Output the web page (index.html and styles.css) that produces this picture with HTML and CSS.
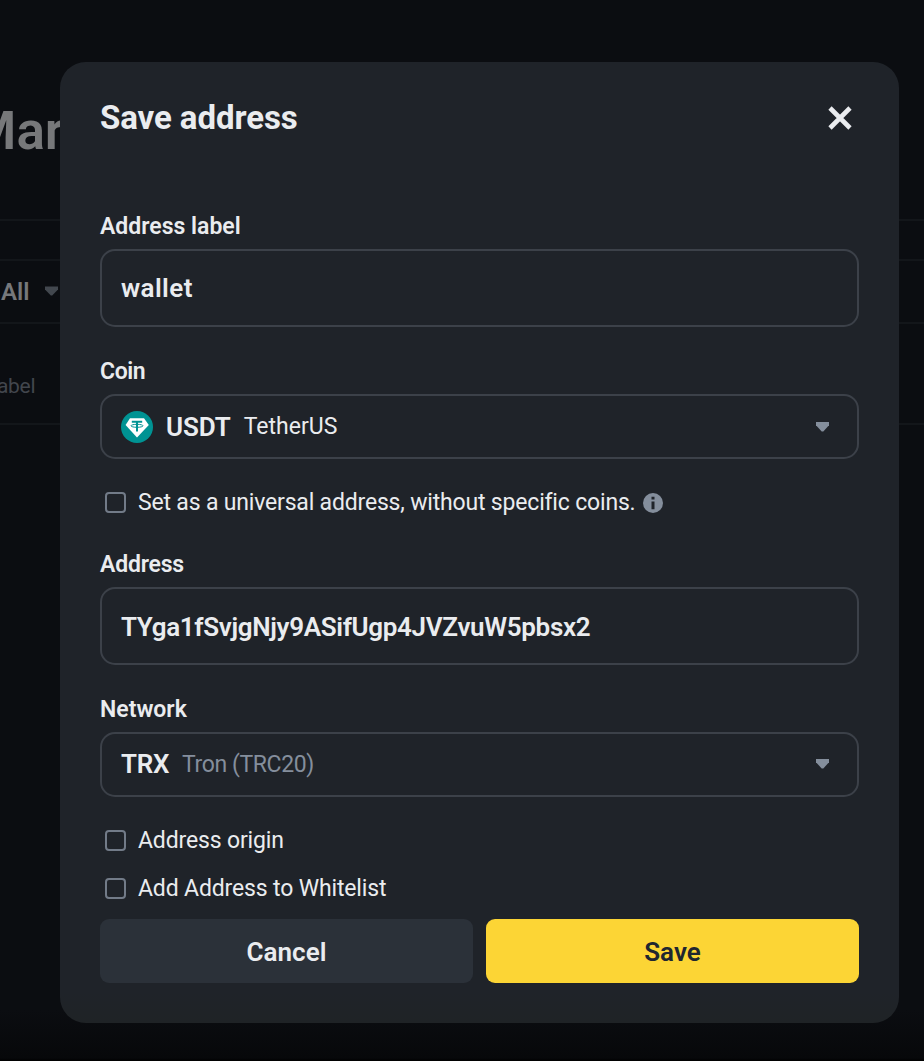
FILE: index.html
```html
<!DOCTYPE html>
<html lang="en">
<head>
<meta charset="utf-8">
<title>Save address</title>
<link rel="stylesheet" href="styles.css">
</head>
<body>
<div class="page">
  <h1 class="page-title"><span class="page-title-text">Mar</span></h1>
  <div class="band"></div>
  <div class="filters"><span class="filter-text">All</span>
    <svg class="filter-caret" viewBox="0 0 13 10"><path d="M0 0.5h13v3L7.2 9.5H5.8L0 3.5z"/></svg>
  </div>
  <div class="table-head"><span class="column-text">abel</span></div>
</div>
<main class="modal">
  <header class="modal-head">
    <h2 class="title">Save address</h2>
    <svg class="close" viewBox="0 0 24 24"><path d="M2 2l20 20M22 2L2 22"/></svg>
  </header>

  <div class="label">Address label</div>
  <div class="box input"><span class="t-wallet">wallet</span></div>

  <div class="label"><span class="t-coin">Coin</span></div>
  <div class="box select">
    <svg class="coin" viewBox="0 0 32 32">
      <circle class="coin-disc" cx="16" cy="16" r="16"/>
      <path class="coin-gem" d="M9 7.2h14l4.8 6.8L16 26.4 4.6 14z"/>
      <path class="coin-mark" d="M10.8 10.8h10.4M16 10.8v9.6"/>
      <ellipse class="coin-ring" cx="16" cy="14.8" rx="6" ry="1.5"/>
    </svg>
    <span class="code t-usdt">USDT</span><span class="name t-tether">TetherUS</span>
    <svg class="caret" viewBox="0 0 13 10"><path d="M0 0h13v3.3L7.3 9.6H5.7L0 3.3z"/></svg>
  </div>

  <div class="check universal"><i class="tick"></i><span class="t-universal">Set as a universal address, without specific coins.</span>
    <svg class="info" viewBox="0 0 20 20"><circle cx="10" cy="10" r="10"/><path d="M8.5 3.8h3v2.7h-3zM8.5 8.4h3v7.8h-3z"/></svg>
  </div>

  <div class="label"><span class="t-address">Address</span></div>
  <div class="box input"><span class="t-hash">TYga1fSvjgNjy9ASifUgp4JVZvuW5pbsx2</span></div>

  <div class="label">Network</div>
  <div class="box select">
    <span class="code t-trx">TRX</span><span class="name muted t-tron">Tron (TRC20)</span>
    <svg class="caret" viewBox="0 0 13 10"><path d="M0 0h13v3.3L7.3 9.6H5.7L0 3.3z"/></svg>
  </div>

  <div class="check origin"><i class="tick"></i><span>Address origin</span></div>
  <div class="check whitelist"><i class="tick"></i><span class="t-white">Add Address to Whitelist</span></div>

  <footer class="actions">
    <button class="btn cancel">Cancel</button>
    <button class="btn save">Save</button>
  </footer>
</main>
</body>
</html>
```
FILE: styles.css
```css
* { box-sizing: border-box; }
body {
  margin: 0;
  width: 924px;
  height: 1061px;
  overflow: hidden;
  position: relative;
  background: linear-gradient(#0b0d11 0, #0b0d11 1010px, #07080a 1058px, #000 1061px);
  color: #eaecef;
  font-family: Roboto, "Liberation Sans", sans-serif;
  white-space: nowrap;
}
h1, h2 { margin: 0; }
svg { display: block; flex: none; }

.page { height: 425px; display: flex; flex-direction: column; }
.page-title { height: 219px; padding-top: 98px; margin-left: -30px; font-size: 53px; line-height: 66px; font-weight: 600; color: #77787a; }
.band { height: 42px; border-top: 2px solid #13161a; border-bottom: 2px solid #13161a; }
.filters { height: 63px; border-bottom: 2px solid #13161a; display: flex; align-items: center; padding-left: 1px; font-size: 24px; font-weight: 600; color: #76787b; }
.filter-caret { width: 13px; height: 10px; margin: -2px 0 0 15px; fill: #42474e; }
.table-head { height: 101px; border-bottom: 2px solid #13161a; padding-top: 49px; font-size: 21px; line-height: 26px; color: #42464d; }
.column-text { margin-left: -3px; letter-spacing: -0.3px; }

.modal {
  position: absolute;
  left: 60px;
  top: 62px;
  width: 839px;
  height: 961px;
  padding: 32px 40px 40px;
  border-radius: 26px;
  background: linear-gradient(#1f2329 0, #1f2329 930px, #1f2326 961px);
  display: flex;
  flex-direction: column;
}
.modal-head { height: 48px; margin-bottom: 67px; display: flex; justify-content: space-between; align-items: center; }
.title { font-size: 33px; font-weight: 700; line-height: 48px; letter-spacing: -0.08px; }
.close { width: 24px; height: 24px; margin-right: 7px; stroke: #eaecef; stroke-width: 4.6; fill: none; }
.label { height: 33px; margin-bottom: 7px; padding-top: 1px; font-size: 23px; line-height: 33px; font-weight: 600; }
.box { flex: none; border: 2px solid #3c4149; border-radius: 15px; display: flex; align-items: center; padding: 0 28px 0 19px; font-size: 26px; }
.input { height: 78px; margin-bottom: 27px; font-weight: 600; }
.select { height: 65px; }
.coin { width: 32px; height: 32px; margin-right: 13px; }
.coin-disc { fill: #009393; }
.coin-gem { fill: #fff; }
.coin-mark { stroke: #009393; stroke-width: 2; fill: none; }
.coin-ring { stroke: #009393; stroke-width: 1; fill: none; }
.code { font-weight: 600; }
.name { font-size: 23px; margin-left: 13px; }
.muted { color: #848e9c; }
.caret { width: 13px; height: 10px; margin-left: auto; fill: #848e9c; }
.check { height: 34px; padding-left: 5px; display: flex; align-items: center; font-size: 23px; letter-spacing: -0.15px; }
.tick { flex: none; width: 21px; height: 21px; margin-right: 12px; border: 2px solid #727b88; border-radius: 4px; }
.universal { margin: 27px 0; }
.origin { margin-top: 27px; }
.whitelist { margin-top: 14px; }
.info { width: 20px; height: 20px; margin-left: 8px; fill: #848e9c; }
.info path { fill: #1f2329; }
.actions { display: grid; grid-template-columns: 1fr 1fr; gap: 13px; margin-top: 14px; }
.btn { height: 64px; border: 0; border-radius: 9px; padding: 2px 0 0; font-family: inherit; font-size: 26px; font-weight: 600; }
.cancel { background: #2b3139; color: #eaecef; }
.save { background: #fcd535; color: #202630; }

.t-wallet { letter-spacing: 0.4px; }
.t-coin { letter-spacing: -0.4px; }
.t-address { letter-spacing: -0.2px; }
.t-universal { letter-spacing: -0.18px; }
.t-hash { letter-spacing: -0.33px; padding-top: 2px; }
.t-usdt { letter-spacing: -0.1px; }
.t-trx { letter-spacing: -0.3px; }
.t-tron { letter-spacing: -0.4px; }
```
